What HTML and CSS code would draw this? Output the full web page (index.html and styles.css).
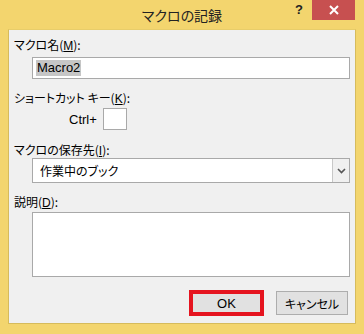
FILE: index.html
```html
<!DOCTYPE html>
<html lang="ja">
<head>
<meta charset="utf-8">
<link rel="stylesheet" href="styles.css">
</head>
<body>
<div class="window">
  <div class="titlebar">
    <div></div>
    <div class="title">マクロの記録</div>
    <div class="controls">
      <span class="help">?</span>
      <span class="close"><svg width="10" height="10" viewBox="0 0 10 10"><path d="M1 1 L9 9 M9 1 L1 9" stroke="#fff" stroke-width="2"/></svg></span>
    </div>
  </div>
  <div class="panel">
    <div class="label l1">マクロ名(<u>M</u>):</div>
    <div class="field input"><span class="sel">Macro2</span></div>
    <div class="label l2">ショートカット キー(<u>K</u>):</div>
    <div class="ctrlrow"><span class="ctrl">Ctrl+</span><span class="keybox"></span></div>
    <div class="label l3">マクロの保存先(<u>I</u>):</div>
    <div class="field select"><span class="opt">作業中のブック</span><span class="drop"><svg width="9" height="6" viewBox="0 0 9 6"><path d="M1 1 L4.5 4.5 L8 1" stroke="#555" stroke-width="1.6" fill="none"/></svg></span></div>
    <div class="label l4">説明(<u>D</u>):</div>
    <div class="field area"></div>
    <div class="buttons">
      <div class="okwrap"><div class="btn ok">OK</div></div>
      <div class="btn cancel">キャンセル</div>
    </div>
  </div>
</div>
</body>
</html>
```
FILE: styles.css
```css
html, body {
  margin: 0;
  padding: 0;
}
body {
  background: #f3d56e;
  font-family: "Noto Sans CJK JP", "Noto Sans", sans-serif;
  font-size: 12px;
  color: #000;
  font-feature-settings: "palt";
}
.window {
  width: 364px;
  height: 334px;
  display: flex;
  flex-direction: column;
  background: #f3d56e;
}
.titlebar {
  height: 29px;
  display: grid;
  grid-template-columns: 1fr auto 1fr;
  align-items: start;
}
.title {
  font-size: 14px;
  line-height: 16px;
  padding-top: 7px;
  color: #222;
}
.controls {
  display: flex;
  justify-content: flex-end;
  align-items: flex-start;
  padding-right: 9px;
}
.help {
  width: 26px;
  height: 20px;
  line-height: 20px;
  text-align: center;
  font-family: "Liberation Sans", sans-serif;
  font-weight: bold;
  font-size: 13px;
  color: #222;
}
.close {
  width: 43px;
  height: 20px;
  background: #c75050;
  display: flex;
  align-items: center;
  justify-content: center;
}
.panel {
  margin: 0 8px;
  height: 295px;
  box-sizing: border-box;
  border: 1px solid #d6bb5c;
  border-top-color: #e8cd6a;
  background: #f0f0f0;
  padding: 7px 5px 0 5px;
  display: flex;
  flex-direction: column;
}
.label {
  line-height: 16px;
  height: 16px;
  white-space: nowrap;
}
.label u {
  font-family: "Liberation Sans", sans-serif;
}
.l2 { margin-top: 11px; }
.l3 { margin-top: 12px; }
.l4 { margin-top: 11px; }
.field {
  margin-left: 18px;
  box-sizing: border-box;
  border: 1px solid #a9a9a9;
  background: #fff;
}
.input {
  margin-top: 4px;
  height: 22px;
  display: flex;
  align-items: center;
  padding-left: 3px;
  font-family: "Liberation Sans", "Noto Sans", sans-serif;
  font-size: 13px;
}
.sel {
  background: #c6c6c6;
  line-height: 16px;
  padding: 0 1px;
}
.ctrlrow {
  margin-top: 2px;
  height: 22px;
  display: flex;
  align-items: center;
  padding-left: 55px;
}
.ctrl {
  font-family: "Liberation Sans", sans-serif;
  font-size: 13px;
  width: 34px;
}
.keybox {
  width: 24px;
  height: 22px;
  box-sizing: border-box;
  border: 1px solid #a9a9a9;
  background: #fff;
}
.select {
  height: 25px;
  display: flex;
  align-items: center;
  justify-content: space-between;
  padding-left: 7px;
}
.opt {
  line-height: 16px;
}
.drop {
  width: 17px;
  height: 23px;
  box-sizing: border-box;
  border-left: 1px solid #c8c8c8;
  background: #f0f0f0;
  display: flex;
  align-items: center;
  justify-content: center;
}
.area {
  margin-top: 2px;
  height: 65px;
}
.buttons {
  margin-top: 13px;
  display: flex;
  justify-content: flex-end;
  align-items: center;
  gap: 12px;
  padding-right: 2px;
}
.okwrap {
  border: 4px solid #e5141f;
  width: 75px;
  height: 26px;
  box-sizing: border-box;
}
.btn {
  background: #e1e1e1;
  display: flex;
  align-items: center;
  justify-content: center;
  box-sizing: border-box;
}
.ok {
  width: 100%;
  height: 100%;
  font-family: "Liberation Sans", sans-serif;
  font-size: 13px;
}
.cancel {
  width: 72px;
  height: 24px;
  border: 1px solid #adadad;
}
```
